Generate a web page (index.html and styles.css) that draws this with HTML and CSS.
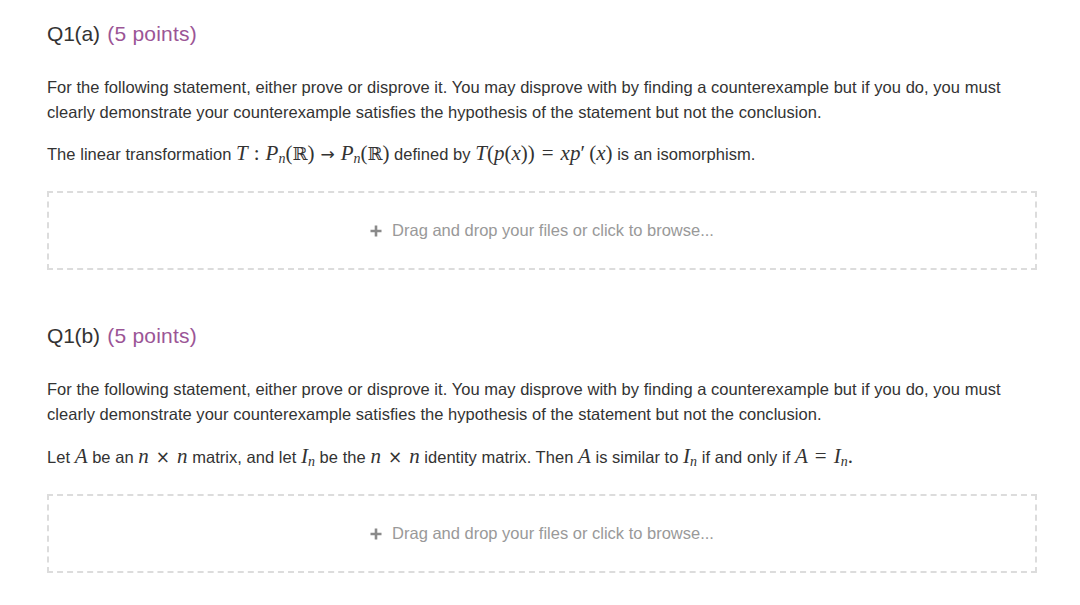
FILE: index.html
```html
<!DOCTYPE html>
<html>
<head>
<meta charset="utf-8">
<link rel="stylesheet" href="styles.css">
</head>
<body>
<div class="page">
  <section class="question">
    <h2 class="q-title">Q1(a) <span class="points">(5 points)</span></h2>
    <p class="text">For the following statement, either prove or disprove it. You may disprove with by finding a counterexample but if you do, you must clearly demonstrate your counterexample satisfies the hypothesis of the statement but not the conclusion.</p>
    <p class="text stmt">The linear transformation <span class="m"><i>T</i><span class="op">:</span><i>P</i><sub><i>n</i></sub>(<span class="bb">ℝ</span>)<span class="op arr">→</span><i>P</i><sub><i>n</i></sub>(<span class="bb">ℝ</span>)</span> defined by <span class="m"><i>T</i>(<i>p</i>(<i>x</i>))<span class="op eq">=</span><i>xp</i>′&thinsp;(<i>x</i>)</span> is an isomorphism.</p>
    <div class="drop"><svg class="plus" width="12" height="12" viewBox="0 0 12 12"><path d="M6 0.5V11.5M0.5 6H11.5" stroke="#8a8a8a" stroke-width="2.6"/></svg>Drag and drop your files or click to browse...</div>
  </section>
  <section class="question">
    <h2 class="q-title">Q1(b) <span class="points">(5 points)</span></h2>
    <p class="text">For the following statement, either prove or disprove it. You may disprove with by finding a counterexample but if you do, you must clearly demonstrate your counterexample satisfies the hypothesis of the statement but not the conclusion.</p>
    <p class="text stmt stmt-b">Let <span class="m"><i>A</i></span> be an <span class="m"><i>n</i><span class="op times">×</span><i>n</i></span> matrix, and let <span class="m"><i>I</i><sub><i>n</i></sub></span> be the <span class="m"><i>n</i><span class="op times">×</span><i>n</i></span> identity matrix. Then <span class="m"><i>A</i></span> is similar to <span class="m"><i>I</i><sub><i>n</i></sub></span> if and only if <span class="m"><i>A</i><span class="op eq">=</span><i>I</i><sub><i>n</i></sub>.</span></p>
    <div class="drop"><svg class="plus" width="12" height="12" viewBox="0 0 12 12"><path d="M6 0.5V11.5M0.5 6H11.5" stroke="#8a8a8a" stroke-width="2.6"/></svg>Drag and drop your files or click to browse...</div>
  </section>
</div>
</body>
</html>
```
FILE: styles.css
```css
html, body {
  margin: 0;
  padding: 0;
  background: #ffffff;
}
.page {
  width: 990px;
  padding: 21px 0 0 47px;
  font-family: "Liberation Sans", Arial, sans-serif;
  color: #333333;
}
.question {
  margin-bottom: 53px;
}
.q-title {
  margin: 0;
  font-size: 21px;
  line-height: 25px;
  font-weight: normal;
  color: #333333;
  letter-spacing: -0.2px;
  word-spacing: 2px;
}
.points {
  color: #9b5596;
  letter-spacing: 0.2px;
  word-spacing: 0;
}
.text {
  margin: 29px 0 0 0;
  font-size: 16.5px;
  letter-spacing: 0.04px;
  line-height: 25px;
  color: #333333;
}
.stmt {
  margin-top: 17px;
}
.stmt-b {
  margin-top: 18px;
}
.m {
  font-family: "Liberation Serif", "Times New Roman", serif;
  font-size: 21px;
  line-height: 0;
  letter-spacing: 0;
}
.m i {
  font-style: italic;
}
.m sub {
  font-size: 14px;
  line-height: 0;
  vertical-align: -3px;
}
.op {
  margin: 0 6px;
}
.op.eq {
  margin: 0 7px;
}
.op.times {
  font-family: "DejaVu Sans", sans-serif;
  font-size: 17px;
  margin: 0 7px;
}
.arr {
  font-family: "DejaVu Sans", sans-serif;
  font-size: 17px;
}
.bb {
  font-family: "DejaVu Serif", serif;
  font-size: 18px;
}
.drop {
  margin-top: 24px;
  height: 75px;
  border: 2px dashed #dcdcdc;
  display: flex;
  align-items: center;
  justify-content: center;
  font-size: 16.5px;
  color: #999999;
}
.plus {
  margin-right: 10px;
  flex: none;
}
```
